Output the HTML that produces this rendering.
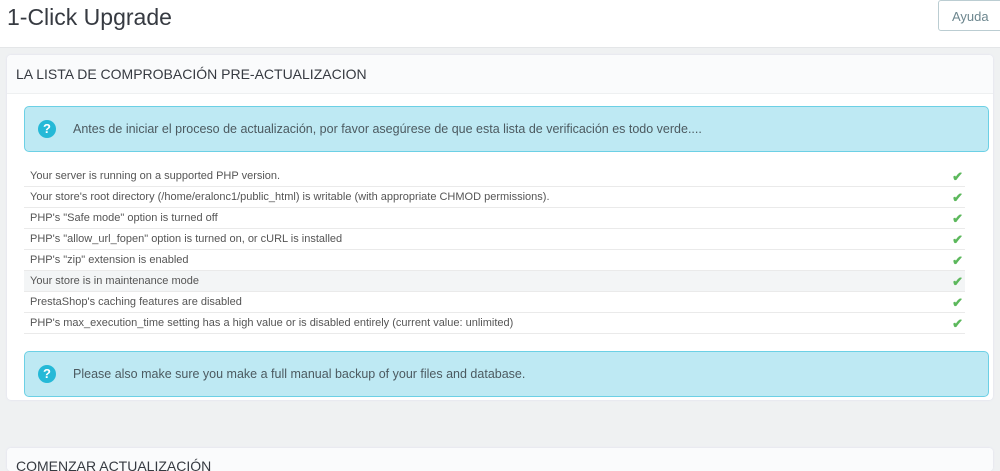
<!DOCTYPE html><html style="width:1000px;height:471px;overflow:hidden"><head><style>
body{margin:0;width:1000px;height:471px;overflow:hidden;background:#eff1f2;font-family:"Liberation Sans",sans-serif;position:relative}
.hdr{position:absolute;left:0;top:0;width:1000px;height:47px;background:#fff;border-bottom:1px solid #e4e6e8}
.hdr h1{margin:0;position:absolute;left:7px;top:4px;font-weight:normal;font-size:23px;color:#363a41}
.btn{position:absolute;left:938px;top:0;width:70px;height:31px;border:1px solid #bbcdd2;border-radius:3px;background:#fff;color:#6c868e;font-size:13px;line-height:31px;text-indent:13px;box-sizing:border-box}
.panel{position:absolute;left:7px;width:986px;background:#fff;border-radius:4px;box-shadow:0 0 2px #dde;overflow:hidden}
.ph{height:38px;background:#fafbfc;border-bottom:1px solid #eef0f1;font-size:14px;color:#363a41;line-height:38px;padding-left:9px;border-radius:4px 4px 0 0}
.alert{position:absolute;left:17px;width:965px;height:46px;box-sizing:border-box;background:#bee9f3;border:1px solid #6cd0e5;border-radius:5px;color:#4c5a60;font-size:12.5px;line-height:44px;padding-left:48px}
.q{position:absolute;left:13px;top:13px;width:18px;height:18px;border-radius:50%;background:#25b9d7;color:#fff;font-weight:bold;font-size:13px;line-height:18px;text-align:center;padding:0}
.rows{position:absolute;left:17px;top:111px;width:941px}
.r{height:20px;border-bottom:1px solid #eaeaea;font-size:11px;color:#555;line-height:21px;padding-left:6px;position:relative}
.r span{position:absolute;right:2px;top:0;color:#5cb85c;font-size:13px;font-weight:bold}
</style></head><body>
<div class="hdr"><h1>1-Click Upgrade</h1><div class="btn">Ayuda</div></div>
<div class="panel" style="top:55px;height:345px">
<div class="ph">LA LISTA DE COMPROBACIÓN PRE-ACTUALIZACION</div>
<div class="alert" style="top:51px"><div class="q">?</div>Antes de iniciar el proceso de actualización, por favor asegúrese de que esta lista de verificación es todo verde....</div>
<div class="rows">
<div class="r">Your server is running on a supported PHP version.<span>✔</span></div>
<div class="r">Your store's root directory (/home/eralonc1/public_html) is writable (with appropriate CHMOD permissions).<span>✔</span></div>
<div class="r">PHP's "Safe mode" option is turned off<span>✔</span></div>
<div class="r">PHP's "allow_url_fopen" option is turned on, or cURL is installed<span>✔</span></div>
<div class="r">PHP's "zip" extension is enabled<span>✔</span></div>
<div class="r" style="background:#f3f5f6">Your store is in maintenance mode<span>✔</span></div>
<div class="r">PrestaShop's caching features are disabled<span>✔</span></div>
<div class="r">PHP's max_execution_time setting has a high value or is disabled entirely (current value: unlimited)<span>✔</span></div>
</div>
<div class="alert" style="top:296px"><div class="q">?</div>Please also make sure you make a full manual backup of your files and database.</div>
</div>
<div class="panel" style="top:448px;height:23px"><div class="ph" style="line-height:36px">COMENZAR ACTUALIZACIÓN</div></div>
</body></html>
